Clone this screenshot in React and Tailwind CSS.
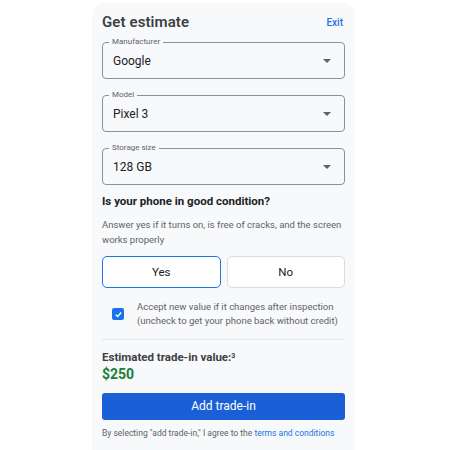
import React from 'react';

const SelectField = ({ label, value }) => (
  <div className="relative h-[37px] rounded-[4px] border border-[#8d9196] flex items-center justify-between pl-[10px] pr-[12px]">
    <span className="absolute -top-[6px] left-[6px] px-[3px] bg-[#f8f9fa] text-[8px] leading-[10px] text-[#5f6368]">{label}</span>
    <span className="text-[12px] text-[#202124]">{value}</span>
    <svg width="8" height="4" viewBox="0 0 8 4" className="mr-[1px]">
      <path d="M0 0 L8 0 L4 4 Z" fill="#5f6368" />
    </svg>
  </div>
);

export default function App() {
  return (
    <div className="w-[450px] h-[450px] bg-white overflow-hidden font-['Roboto',sans-serif]">
      <div className="ml-[92px] mt-[3px] w-[263px] h-[460px] bg-[#f8f9fa] rounded-[12px] px-[10px] pt-[10px]">
        <div className="flex items-center justify-between h-[18px]">
          <h1 className="text-[15px] font-semibold text-[#3c4043] tracking-[0.1px]">Get estimate</h1>
          <a className="text-[10px] font-medium text-[#1a73e8] mr-[2px]">Exit</a>
        </div>

        <div className="mt-[11px] flex flex-col gap-[16px]">
          <SelectField label="Manufacturer" value="Google" />
          <SelectField label="Model" value="Pixel 3" />
          <SelectField label="Storage size" value="128 GB" />
        </div>

        <p className="mt-[8px] text-[11.5px] font-bold text-[#202124]">Is your phone in good condition?</p>
        <p className="mt-[7px] text-[9.5px] leading-[15px] text-[#5f6368]">
          Answer yes if it turns on, is free of cracks, and the screen works properly
        </p>

        <div className="mt-[9px] flex gap-[6px]">
          <button className="flex-1 h-[32px] rounded-[5px] border-[1.5px] border-[#1a73e8] bg-white text-[11.5px] text-[#202124]">Yes</button>
          <button className="flex-1 h-[32px] rounded-[5px] border border-[#dadce0] bg-white text-[11.5px] text-[#202124]">No</button>
        </div>

        <div className="mt-[12px] flex items-center gap-[13px] pl-[10px]">
          <div className="w-[12px] h-[12px] rounded-[2px] bg-[#1a73e8] flex items-center justify-center shrink-0">
            <svg width="9" height="9" viewBox="0 0 10 10">
              <path d="M2 5.2 L4.1 7.2 L8 2.8" stroke="white" strokeWidth="1.5" fill="none" />
            </svg>
          </div>
          <p className="text-[9.5px] leading-[14px] text-[#5f6368]">
            Accept new value if it changes after inspection<br />(uncheck to get your phone back without credit)
          </p>
        </div>

        <div className="mt-[11px] border-t border-[#e3e4e6]" />

        <p className="mt-[9px] text-[11.5px] font-bold text-[#3c4043]">
          Estimated trade-in value:<sup className="text-[7px] font-bold">3</sup>
        </p>
        <p className="-mt-[1px] text-[14px] font-bold text-[#188038] leading-[16px]">$250</p>

        <button className="mt-[11px] w-full h-[27px] rounded-[3px] bg-[#1a5fd6] text-white text-[12px]">Add trade-in</button>

        <p className="mt-[7px] text-[8.5px] text-[#5f6368]">
          By selecting "add trade-in," I agree to the <span className="text-[#1a73e8]">terms and conditions</span>
        </p>
      </div>
    </div>
  );
}
